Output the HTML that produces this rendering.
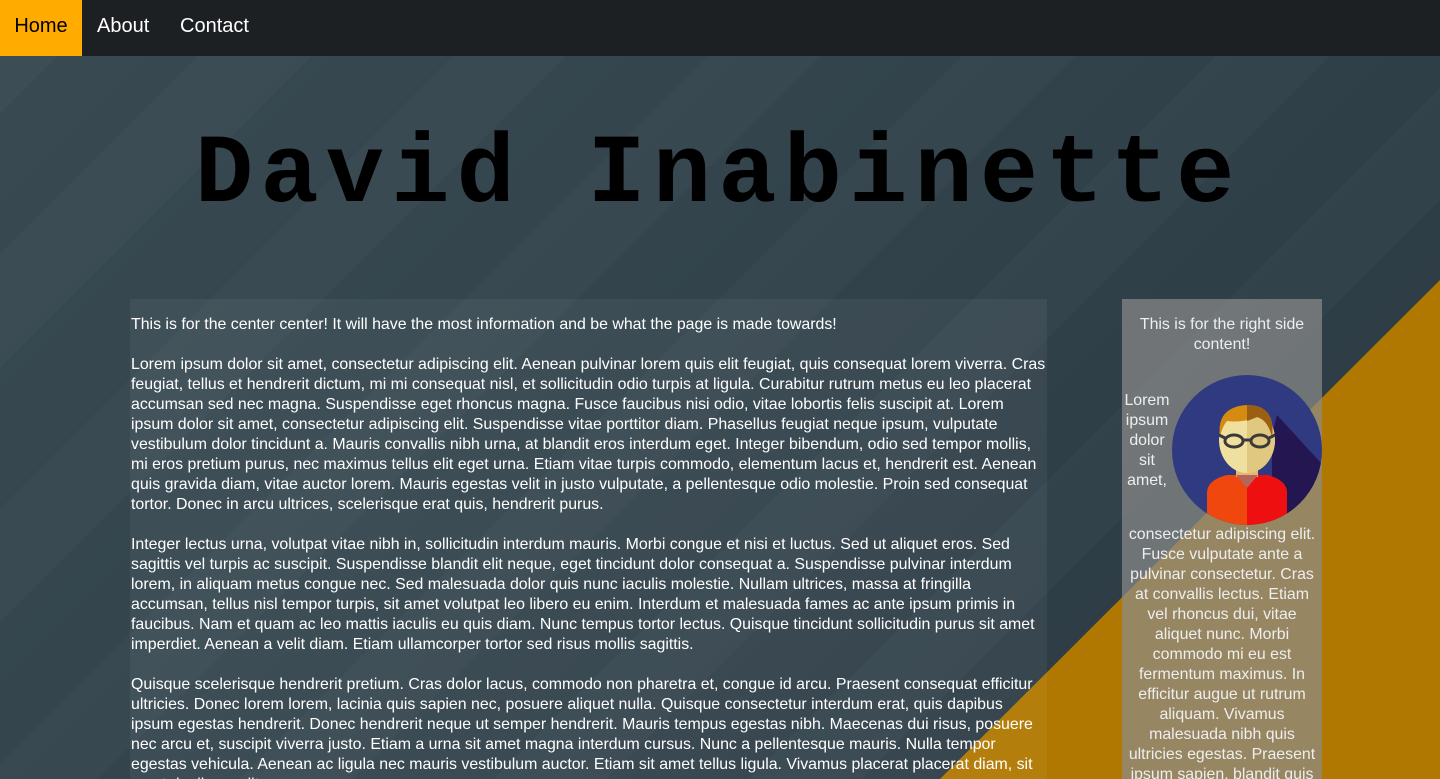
<!DOCTYPE html>
<html><head><style>
html,body{margin:0;width:1440px;height:779px;overflow:hidden;}
body{font-family:"Liberation Sans",sans-serif;position:relative;
background:linear-gradient(135deg,#3a4b54 0%,#34454e 40%,#2b3a42 100%);}
.stripes{position:absolute;inset:0;background:repeating-linear-gradient(135deg,rgba(255,255,255,0.015) 0 80px,rgba(0,0,0,0.02) 80px 180px);}
.tri{position:absolute;inset:0;background:#b07800;clip-path:polygon(1440px 280px,1440px 779px,940px 779px);}
nav{position:absolute;top:0;left:0;width:1440px;height:56px;background:#1d2023;}
nav a{position:absolute;top:0;height:56px;line-height:52px;font-size:20px;color:#fff;text-decoration:none;}
h1{position:absolute;top:116px;left:195px;margin:0;font-family:"Liberation Mono",monospace;font-size:97px;font-weight:bold;letter-spacing:7.2px;color:#000;line-height:120px;}
.center{position:absolute;left:130px;top:299px;width:917px;height:480px;background:rgba(255,255,255,0.05);color:#fff;font-size:15.9px;line-height:20px;overflow:hidden;}
.center p{margin:0 0 20px 1px;}
.right{position:absolute;left:1122px;top:299px;width:200px;height:480px;background:rgba(140,140,140,0.7);color:#eee;font-size:15.9px;line-height:20px;text-align:center;overflow:hidden;}
</style></head><body>
<div class="stripes"></div><div class="tri"></div>
<nav><a style="left:0;width:82px;background:#ffab00;color:#000;text-align:center">Home</a><a style="left:97px">About</a><a style="left:180px">Contact</a></nav>
<h1>David Inabinette</h1>
<div class="center"><div style="height:16px"></div>
<p>This is for the center center! It will have the most information and be what the page is made towards!</p>
<p>Lorem ipsum dolor sit amet, consectetur adipiscing elit. Aenean pulvinar lorem quis elit feugiat, quis consequat lorem viverra. Cras feugiat, tellus et hendrerit dictum, mi mi consequat nisl, et sollicitudin odio turpis at ligula. Curabitur rutrum metus eu leo placerat accumsan sed nec magna. Suspendisse eget rhoncus magna. Fusce faucibus nisi odio, vitae lobortis felis suscipit at. Lorem ipsum dolor sit amet, consectetur adipiscing elit. Suspendisse vitae porttitor diam. Phasellus feugiat neque ipsum, vulputate vestibulum dolor tincidunt a. Mauris convallis nibh urna, at blandit eros interdum eget. Integer bibendum, odio sed tempor mollis, mi eros pretium purus, nec maximus tellus elit eget urna. Etiam vitae turpis commodo, elementum lacus et, hendrerit est. Aenean quis gravida diam, vitae auctor lorem. Mauris egestas velit in justo vulputate, a pellentesque odio molestie. Proin sed consequat tortor. Donec in arcu ultrices, scelerisque erat quis, hendrerit purus.</p>
<p>Integer lectus urna, volutpat vitae nibh in, sollicitudin interdum mauris. Morbi congue et nisi et luctus. Sed ut aliquet eros. Sed sagittis vel turpis ac suscipit. Suspendisse blandit elit neque, eget tincidunt dolor consequat a. Suspendisse pulvinar interdum lorem, in aliquam metus congue nec. Sed malesuada dolor quis nunc iaculis molestie. Nullam ultrices, massa at fringilla accumsan, tellus nisl tempor turpis, sit amet volutpat leo libero eu enim. Interdum et malesuada fames ac ante ipsum primis in faucibus. Nam et quam ac leo mattis iaculis eu quis diam. Nunc tempus tortor lectus. Quisque tincidunt sollicitudin purus sit amet imperdiet. Aenean a velit diam. Etiam ullamcorper tortor sed risus mollis sagittis.</p>
<p>Quisque scelerisque hendrerit pretium. Cras dolor lacus, commodo non pharetra et, congue id arcu. Praesent consequat efficitur ultricies. Donec lorem lorem, lacinia quis sapien nec, posuere aliquet nulla. Quisque consectetur interdum erat, quis dapibus ipsum egestas hendrerit. Donec hendrerit neque ut semper hendrerit. Mauris tempus egestas nibh. Maecenas dui risus, posuere nec arcu et, suscipit viverra justo. Etiam a urna sit amet magna interdum cursus. Nunc a pellentesque mauris. Nulla tempor egestas vehicula. Aenean ac ligula nec mauris vestibulum auctor. Etiam sit amet tellus ligula. Vivamus placerat placerat diam, sit amet dapibus velit.</p>
</div>
<div class="right"><div style="height:16px"></div>
<div style="padding:0 10px">This is for the right side content!</div>
<div style="height:20px"></div>
<div style="display:flex;align-items:flex-start">
<div style="width:50px;text-align:center;padding-top:16px">Lorem ipsum dolor sit amet,</div>
<svg width="150" height="150" viewBox="0 0 150 150">
<defs><clipPath id="c"><circle cx="75" cy="75" r="75"/></clipPath></defs>
<circle cx="75" cy="75" r="75" fill="#303a80"/>
<g clip-path="url(#c)">
<polygon points="105,40 160,100 150,150 100,150 100,60" fill="#241650"/>
<path d="M35,150 V118 Q35,105 55,100 L95,100 Q115,105 115,118 V150Z" fill="#f0470f"/>
<path d="M75,100 L95,100 Q115,105 115,118 V150 H75Z" fill="#ee1010"/>
<rect x="64" y="88" width="22" height="14" fill="#e5b770"/>
<polygon points="64,100 86,100 75,113" fill="#b5655a"/>
</g>
<ellipse cx="75" cy="65" rx="28" ry="33" fill="#f0e0a0"/>
<path d="M75,32 A28,33 0 0 1 75,98Z" fill="#e0c880"/>
<path d="M48,62 Q44,32 75,30 Q104,30 100,62 Q96,45 85,42 Q70,48 55,46 Q50,52 48,62Z" fill="#d58a10"/>
<path d="M75,30 Q104,30 100,62 Q96,45 85,42 Q78,45 75,46Z" fill="#9a5f10"/>
<g fill="none" stroke="#3a3a3a" stroke-width="3"><ellipse cx="62" cy="66" rx="9" ry="6"/><ellipse cx="88" cy="66" rx="9" ry="6"/><path d="M71,65 h8 M53,63 l-6,-3 M97,63 l6,-3"/></g>
</svg></div>
<div style="padding:0 4px;margin-top:0">consectetur adipiscing elit. Fusce vulputate ante a pulvinar consectetur. Cras at convallis lectus. Etiam vel rhoncus dui, vitae aliquet nunc. Morbi commodo mi eu est fermentum maximus. In efficitur augue ut rutrum aliquam. Vivamus malesuada nibh quis ultricies egestas. Praesent ipsum sapien, blandit quis</div>
</div>
</body></html>
